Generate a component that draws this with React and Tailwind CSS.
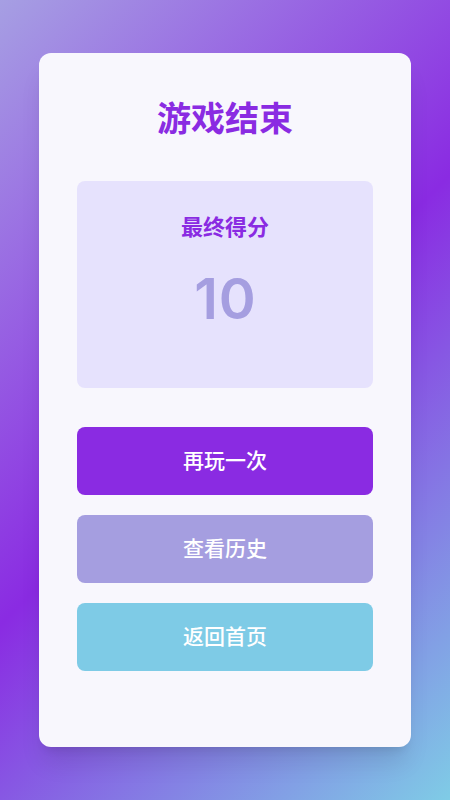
export default function App() {
  return <GameOver />;
}

function GameOver() {
  const buttons = [
    { label: "再玩一次", color: "bg-[#8a2be2]" },
    { label: "查看历史", color: "bg-[#a59ee0]" },
    { label: "返回首页", color: "bg-[#7ecbe6]" },
  ];

  return (
    <div
      className="flex h-[800px] w-[450px] items-center justify-center bg-[linear-gradient(135deg,#a69fe3_0%,#8a2be2_50%,#7fcce6_100%)]"
      style={{ fontFamily: '"Noto Sans", "Noto Sans CJK SC", sans-serif' }}
    >
      <div className="flex h-[694px] w-[372px] flex-col rounded-xl bg-[#f8f7fd] px-[38px] pt-[47px] shadow-xl">
        <h1 className="text-center text-[34px] font-bold leading-[36px] text-[#8a2be2]">
          游戏结束
        </h1>
        <div className="mt-[45px] flex h-[207px] flex-col items-center rounded-lg bg-[#e6e2fd] pt-[31px]">
          <div className="text-[22px] font-semibold leading-[28px] text-[#8a2be2]">
            最终得分
          </div>
          <div className="mt-[29px] pl-[1px] font-['Inter',sans-serif] text-[56px] font-semibold leading-[60px] tracking-[1px] text-[#a59ee0]">
            10
          </div>
        </div>
        <div className="mt-[39px] flex flex-col gap-[20px]">
          {buttons.map((b) => (
            <button
              key={b.label}
              className={
                "flex h-[68px] items-center justify-center rounded-lg text-[21px] font-medium text-white " +
                b.color
              }
            >
              {b.label}
            </button>
          ))}
        </div>
      </div>
    </div>
  );
}
